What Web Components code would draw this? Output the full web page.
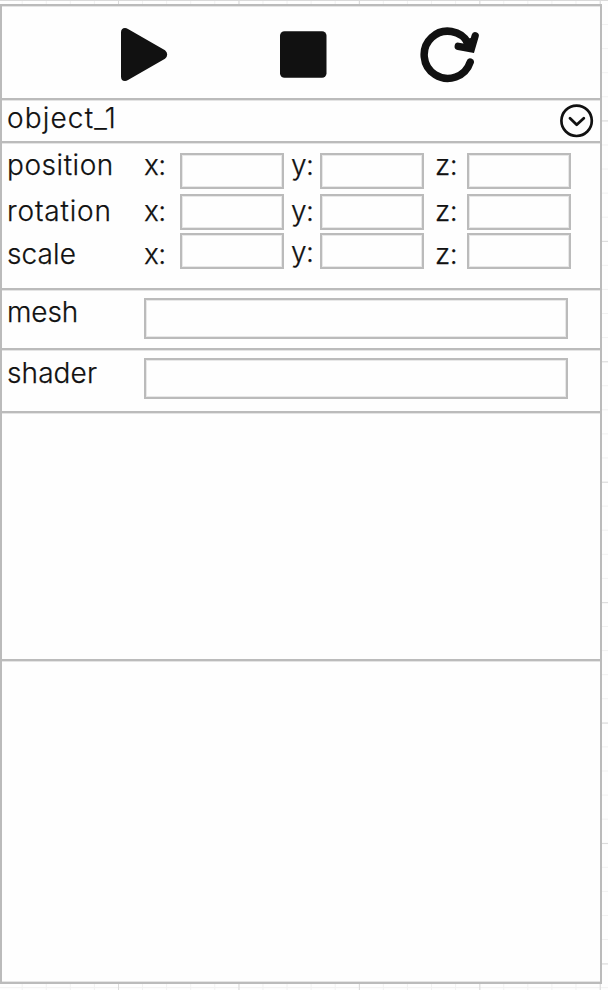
<!DOCTYPE html>
<html lang="en">
<head>
<meta charset="utf-8">
<title>Inspector</title>
<style>
html, body { margin: 0; height: 990px; overflow: hidden; }
body { font-family: Inter, "Liberation Sans", sans-serif; font-weight: 300; color: #111; }
</style>
</head>
<body>
<object-inspector></object-inspector>
<script>
const define = (name, html) => customElements.define(name, class extends HTMLElement {
  constructor() {
    super();
    this.attachShadow({ mode: 'open' }).innerHTML = html;
  }
});

define('canvas-grid', `
<style>
:host { display: block; box-sizing: border-box; height: 990px; padding-top: 4px; background: #fefefe; overflow: hidden;
  background-image:
    linear-gradient(90deg, #dadada 1px, transparent 1px),
    linear-gradient(#dadada 1px, transparent 1px),
    linear-gradient(90deg, #f1f1f1 1px, transparent 1px),
    linear-gradient(#f1f1f1 1px, transparent 1px);
  background-size: 120.45px 120.45px, 120.45px 120.45px, 24.09px 24.09px, 24.09px 24.09px;
  background-position: -2.4px 0, 0 0, -2.4px 0, 0 0; }
</style><slot></slot>`);

define('inspector-panel', `
<style>
:host { display: block; box-sizing: border-box; width: 602px; height: 980px; background: #fefefe; border: 2px solid #bbb; box-shadow: inset 0 1px #e4e4e4, inset 0 -1px #e4e4e4; }
</style><slot></slot>`);

define('panel-section', `
<style>
:host { display: block; box-sizing: border-box; height: var(--h); border-bottom: 2px solid #bbb; box-shadow: 0 1px #e4e4e4; }
:host([last]) { border: 0; box-shadow: none; }
</style><slot></slot>`);

define('playback-bar', `
<style>
:host { display: grid; grid-template-columns: 159px 140px 60px; padding: 19px 0 0 118px; align-items: start; }
svg { display: block; fill: #111; }
</style>
<svg width="50" height="60" viewBox="120 25 50 60"><path d="M121 32.5Q121 28 125 28Q126.5 28 128 29L165 50.3Q167.2 52 167.2 54.5T165 58.7L128 80Q126.5 81 125 81Q121 81 121 76.5Z"/></svg>
<svg width="50" height="60" viewBox="279 25 50 60"><rect x="280" y="31.2" width="46.5" height="46.5" rx="4.5"/></svg>
<svg width="62" height="60" viewBox="419 25 62 60"><g fill="none" stroke="#111" stroke-width="7.5" stroke-linecap="round"><path d="M470.2 62.1A23.6 23.6 0 1 1 468.500 43.500"/><path d="M458.200 46.300L471.400 48.700L475.200 35.800" stroke-width="7.300"/></g><path d="M462 40L471 38L473.500 52L466 50Z"/></svg>`);

define('text-label', `
<style>
:host { display: block; font-size: 28px; line-height: 28px; white-space: nowrap; margin-top: var(--dy, 0); letter-spacing: var(--ls, 0); -webkit-text-stroke: 0.25px #111; }
</style><slot></slot>`);

define('input-box', `
<style>
:host { display: block; box-sizing: border-box; width: var(--w, 104px); height: var(--bh, 36px); border: 2px solid #bbb; box-shadow: inset 0 0 0 1px #e8e8e8; }
</style>`);

define('object-picker', `
<style>
:host { display: flex; justify-content: space-between; align-items: start; padding: 4px 5px 0 5px; }
svg { display: block; fill: none; stroke: #111; stroke-linecap: round; stroke-linejoin: round; }
text-label { --ls: 1.15px; }
</style>
<text-label><slot></slot></text-label>
<svg width="36" height="36" viewBox="559 104 36 36"><circle cx="576.6" cy="120.8" r="15.2" stroke-width="2.7"/><path d="M570 118.3L576.7 124.800L583.800 118.300" stroke-width="2.800"/></svg>`);

define('vector-field', `
<style>
:host { display: grid; grid-template-columns: 137px 36px 111px 29px 115px 32px 104px; height: var(--row, 39px); align-items: start; padding-left: 5px; }
text-label.axis { letter-spacing: -0.5px; }
text-label.y { margin-top: var(--ydy, var(--dy)); }
</style>
<text-label><slot></slot></text-label>
<text-label class="axis">x:</text-label><input-box></input-box>
<text-label class="axis y">y:</text-label><input-box></input-box>
<text-label class="axis">z:</text-label><input-box></input-box>`);

define('asset-field', `
<style>
:host { display: grid; grid-template-columns: 137px 1fr; align-items: start; padding: var(--top, 7px) 0 0 5px; }
input-box { --w: 424px; --bh: 41px; }
</style>
<text-label><slot></slot></text-label><input-box></input-box>`);

define('object-inspector', `
<style>
:host { display: block; }
.transform { padding-top: 10px; }
</style>
<canvas-grid><inspector-panel>
<panel-section style="--h:94px"><playback-bar></playback-bar></panel-section>
<panel-section style="--h:43px"><object-picker>object_1</object-picker></panel-section>
<panel-section style="--h:147px"><div class="transform">
<vector-field style="--row:41px;--dy:-2px;--ls:.55px">position</vector-field>
<vector-field style="--dy:3px;--ls:.85px">rotation</vector-field>
<vector-field style="--dy:7px;--ydy:5px;--ls:0.1px">scale</vector-field>
</div></panel-section>
<panel-section style="--h:60px"><asset-field style="--top:8px;--dy:0px;--ls:-.1px">mesh</asset-field></panel-section>
<panel-section style="--h:63px"><asset-field style="--top:8px;--dy:1px;--ls:.1px">shader</asset-field></panel-section>
<panel-section style="--h:248px"></panel-section>
<panel-section last style="--h:320px"></panel-section>
</inspector-panel></canvas-grid>`);
</script>
</body>
</html>
